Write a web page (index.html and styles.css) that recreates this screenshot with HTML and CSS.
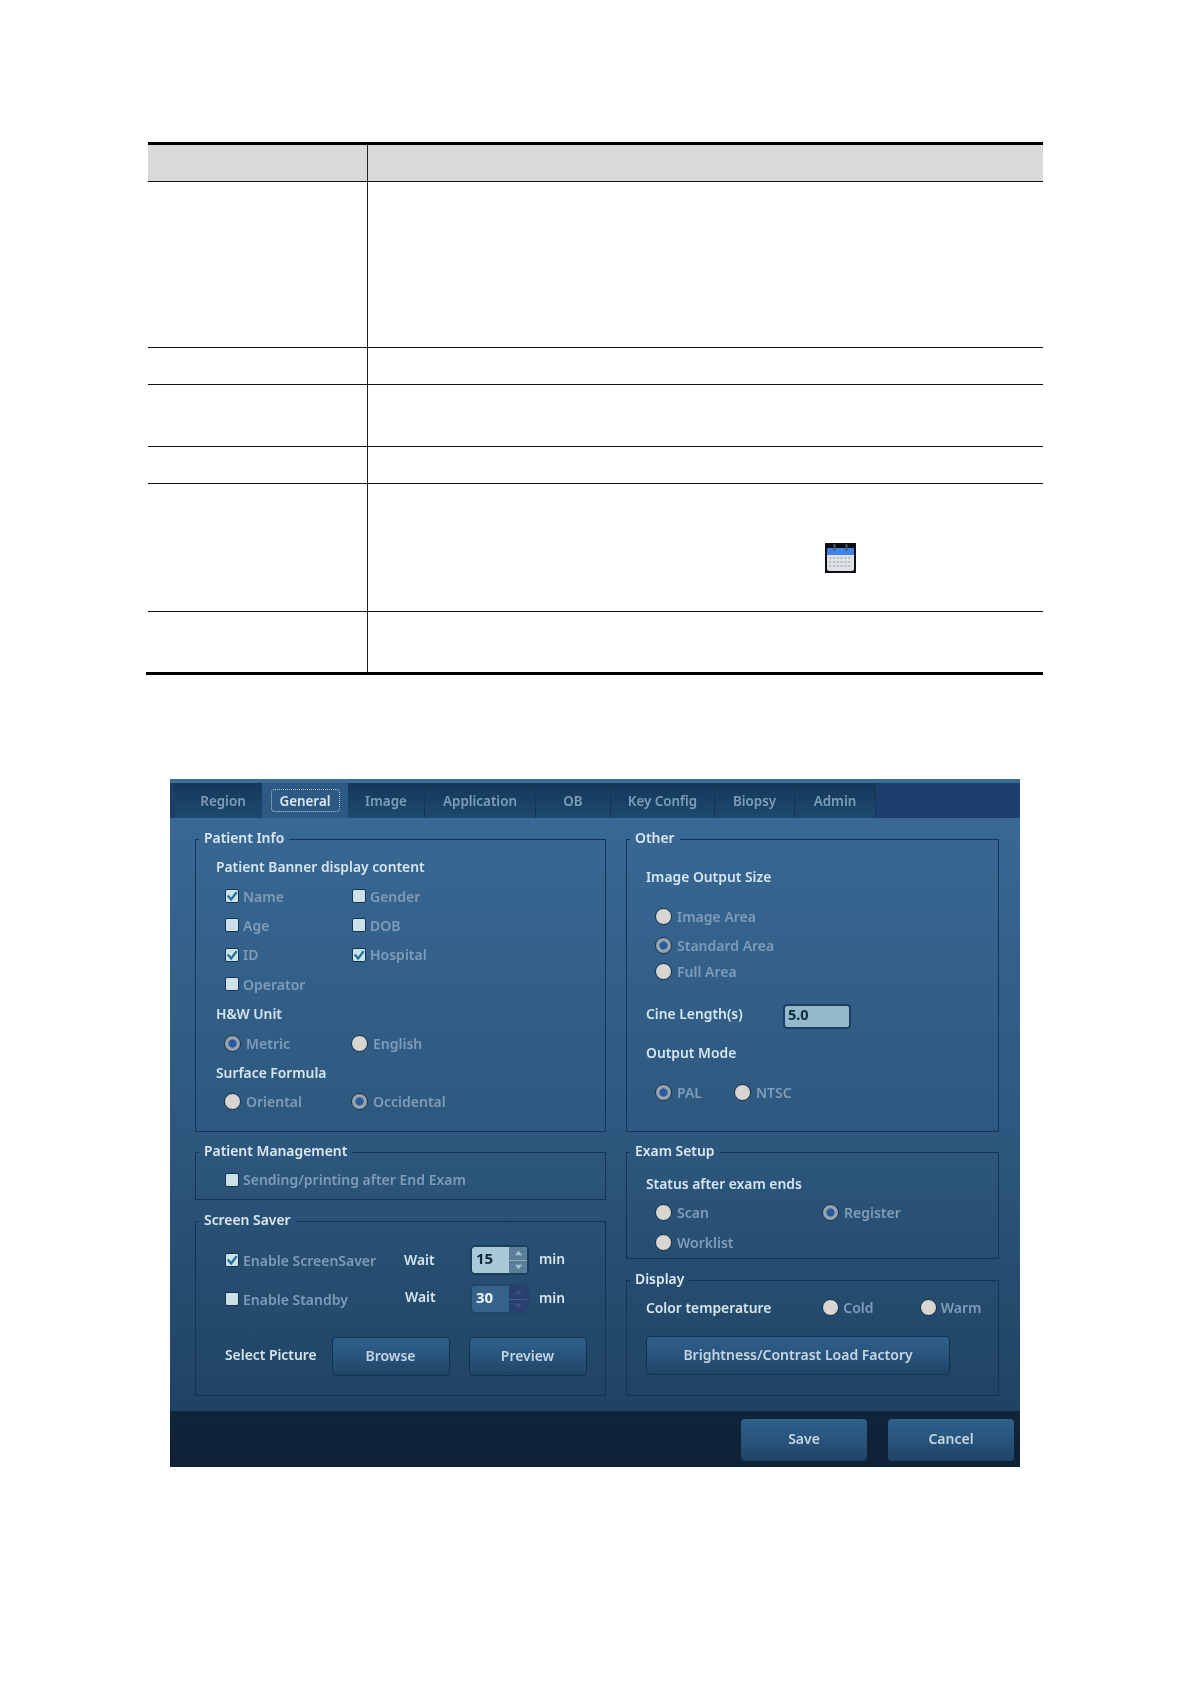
FILE: index.html
```html
<!DOCTYPE html>
<html lang="en">
<head>
<meta charset="utf-8">
<title>Setup - General</title>
<link rel="stylesheet" href="styles.css">
</head>
<body>
<svg class="defs" width="0" height="0" aria-hidden="true">
  <symbol id="tick" viewBox="0 0 14 14"><path d="M2 6.500 L6 11 L12.500 2.500" fill="none" stroke="#17739c" stroke-width="2.600"/></symbol>
  <symbol id="up" viewBox="0 0 10 6"><path d="M5 0.500 L9 5.500 H1 Z"/></symbol>
  <symbol id="down" viewBox="0 0 10 6"><path d="M1 0.500 H9 L5 5.500 Z"/></symbol>
</svg>

<section class="sheet">
  <div class="row row-head"><div class="c1"></div><div class="c2"></div></div>
  <div class="row row-a"><div class="c1"></div><div class="c2"></div></div>
  <div class="row row-b"><div class="c1"></div><div class="c2"></div></div>
  <div class="row row-c"><div class="c1"></div><div class="c2"></div></div>
  <div class="row row-b"><div class="c1"></div><div class="c2"></div></div>
  <div class="row row-d"><div class="c1"></div>
    <div class="c2 c2-icon">
      <svg class="calendar" viewBox="0 0 31 30" width="31" height="30" aria-hidden="true">
        <rect width="31" height="30" fill="#0c0f14"/>
        <rect x="2" y="5" width="27" height="23" rx="2.500" fill="#dfe1e5"/>
        <path d="M2 12 V7.500 A2.500 2.500 0 0 1 4.500 5 H26.500 A2.500 2.500 0 0 1 29 7.500 V12 Z" fill="#3f83ea"/>
        <path d="M9.500 1 V8 M21.500 1 V8" stroke="#4b5664" stroke-width="2"/>
        <g fill="none" stroke="#a0a4ac" stroke-width="1.200" stroke-dasharray="2.400 1.400">
          <path d="M4 15 H27 M4 19 H27 M4 23 H27"/>
        </g>
      </svg>
    </div>
  </div>
  <div class="row row-last"><div class="c1"></div><div class="c2"></div></div>
</section>

<section class="panel">
  <nav class="tabs">
    <a class="tab t-region">Region</a>
    <a class="tab t-general active"><span class="focus">General</span></a>
    <a class="tab t-image">Image</a>
    <a class="tab t-app">Application</a>
    <a class="tab t-ob">OB</a>
    <a class="tab t-key">Key Config</a>
    <a class="tab t-biopsy">Biopsy</a>
    <a class="tab t-admin">Admin</a>
  </nav>

  <div class="body">
    <div class="col col-left">
      <fieldset class="fs fs-info">
        <legend>Patient Info</legend>
        <div class="line head">Patient Banner display content</div>
        <div class="line opts two"><label class="opt"><i class="cb"><svg><use href="#tick"/></svg></i>Name</label><label class="opt"><i class="cb"></i>Gender</label></div>
        <div class="line opts two"><label class="opt"><i class="cb"></i>Age</label><label class="opt"><i class="cb"></i>DOB</label></div>
        <div class="line opts two"><label class="opt"><i class="cb"><svg><use href="#tick"/></svg></i>ID</label><label class="opt"><i class="cb"><svg><use href="#tick"/></svg></i>Hospital</label></div>
        <div class="line opts two"><label class="opt"><i class="cb"></i>Operator</label></div>
        <div class="line head">H&amp;W Unit</div>
        <div class="line opts two"><label class="opt"><i class="rb on"></i>Metric</label><label class="opt"><i class="rb"></i>English</label></div>
        <div class="line head">Surface Formula</div>
        <div class="line opts two"><label class="opt"><i class="rb"></i>Oriental</label><label class="opt"><i class="rb on"></i>Occidental</label></div>
      </fieldset>

      <fieldset class="fs fs-mgmt">
        <legend>Patient Management</legend>
        <div class="line opts"><label class="opt"><i class="cb"></i>Sending/printing after End Exam</label></div>
      </fieldset>

      <fieldset class="fs fs-saver">
        <legend>Screen Saver</legend>
        <div class="saver-row">
          <label class="opt"><i class="cb"><svg><use href="#tick"/></svg></i>Enable ScreenSaver</label>
          <span class="head wait-1">Wait</span>
          <div class="spin"><span class="spin-val">15</span><span class="spin-btns"><b><svg><use href="#up"/></svg></b><b><svg><use href="#down"/></svg></b></span></div>
          <span class="head unit">min</span>
        </div>
        <div class="saver-row second">
          <label class="opt"><i class="cb"></i>Enable Standby</label>
          <span class="head wait-2">Wait</span>
          <div class="spin off"><span class="spin-val">30</span><span class="spin-btns"><b><svg><use href="#up"/></svg></b><b><svg><use href="#down"/></svg></b></span></div>
          <span class="head unit">min</span>
        </div>
        <div class="pick-row">
          <span class="head pick-label">Select Picture</span>
          <button class="btn btn-browse" type="button">Browse</button>
          <button class="btn btn-preview" type="button">Preview</button>
        </div>
      </fieldset>
    </div>

    <div class="col col-right">
      <fieldset class="fs fs-other">
        <legend>Other</legend>
        <div class="line head">Image Output Size</div>
        <div class="line opts"><label class="opt"><i class="rb"></i>Image Area</label></div>
        <div class="line opts"><label class="opt"><i class="rb on"></i>Standard Area</label></div>
        <div class="line opts"><label class="opt"><i class="rb"></i>Full Area</label></div>
        <div class="line head cine"><span class="cine-label">Cine Length(s)</span><span class="field">5.0</span></div>
        <div class="line head">Output Mode</div>
        <div class="line opts"><label class="opt opt-pal"><i class="rb on"></i>PAL</label><label class="opt"><i class="rb"></i>NTSC</label></div>
      </fieldset>

      <fieldset class="fs fs-exam">
        <legend>Exam Setup</legend>
        <div class="line head">Status after exam ends</div>
        <div class="line opts"><label class="opt opt-scan"><i class="rb"></i>Scan</label><label class="opt"><i class="rb on"></i>Register</label></div>
        <div class="line opts"><label class="opt"><i class="rb"></i>Worklist</label></div>
      </fieldset>

      <fieldset class="fs fs-display">
        <legend>Display</legend>
        <div class="line temp"><span class="head temp-label">Color temperature</span><label class="opt opt-cold"><i class="rb"></i>Cold</label><label class="opt"><i class="rb"></i>Warm</label></div>
        <button class="btn btn-load" type="button">Brightness/Contrast Load Factory</button>
      </fieldset>
    </div>
  </div>

  <footer class="foot">
    <button class="btn btn-foot" type="button">Save</button>
    <button class="btn btn-foot" type="button">Cancel</button>
  </footer>
</section>
</body>
</html>
```

FILE: styles.css
```css
* { box-sizing: border-box; }
html, body { margin: 0; padding: 0; background: #fff; }
body { width: 1190px; height: 1684px; overflow: hidden; font-family: "Noto Sans", "Open Sans", sans-serif; }
.defs { position: absolute; }

/* document table */
.sheet { margin: 142px 147px 0 148px; border-top: 3px solid #000; height: 533px; }
.row { display: flex; border-bottom: 1px solid #111; }
.c1 { width: 220px; border-right: 1px solid #222; }
.c2 { flex: 1; }
.row-head { height: 37px; background: #d9d9d9; }
.row-a { height: 166px; }
.row-b { height: 37px; }
.row-c { height: 62px; }
.row-d { height: 128px; }
.c2-icon { padding: 59px 0 0 457px; }
.calendar { display: block; filter: blur(0.4px); }
.row-last { height: 63px; margin-left: -2px; border-bottom: 3px solid #000; }
.row-last .c1 { width: 222px; }

/* device panel */
.panel { width: 850px; height: 688px; margin: 104px 0 0 170px; display: flex; flex-direction: column; background: #2d577d; filter: blur(0.3px); }
.tabs { height: 39px; display: flex; padding-left: 5px; border-top: 4px solid #3b6d98; background: linear-gradient(90deg, #1b3e66, #1d3f6e); font-size: 13.400px; font-weight: 600; color: #7f9db8; }
.tab { display: flex; align-items: center; justify-content: center; background: linear-gradient(180deg, #14375a, #1e4a70); border-right: 1px solid #173552; }
.t-region { width: 87px; padding-left: 9px; border-right: 0; }
.t-general { width: 86px; }
.t-image { width: 77px; }
.t-app { width: 111px; }
.t-ob { width: 75px; }
.t-key { width: 104px; }
.t-biopsy { width: 80px; }
.t-admin { width: 81px; }
.tab.active { background: #2d5a84; border: 0; color: #dce8ee; }
.focus { width: 69px; height: 23px; margin-top: -1px; padding-top: 2px; display: flex; align-items: center; justify-content: center; border: 1px dotted #b8ccd8; border-radius: 4px; }

.body { height: 593px; padding: 10px 0 0 25px; display: flex; gap: 20px; background: linear-gradient(180deg, #386894 0%, #2d577d 55%, #1f4362 100%); }
.col { display: flex; flex-direction: column; }
.col-left { width: 411px; }
.col-right { width: 373px; }

.fs { --pad: 19px; margin: 0; padding: 0 0 0 var(--pad); min-width: 0; border: 1px solid #12345c; color: #dbe8ef; font-size: 13.850px; font-weight: 600; }
.fs legend { height: 22px; margin-left: calc(3px - var(--pad)); padding: 1px 5px 3px; line-height: 18px; font-size: 13.900px; color: #dbe8ef; }

.line { height: 26px; display: flex; align-items: center; }
.head { color: #d6e5ee; white-space: nowrap; }
.opts { margin-left: 9px; }
.two { display: grid; grid-template-columns: 127px 1fr; align-items: center; }
.opt { display: flex; align-items: center; font-size: 14px; color: #7f9cb8; white-space: nowrap; }

/* checkbox and radio */
.cb { flex: none; width: 14px; height: 14px; margin-right: 4px; background: #cde0e8; border: 1px solid #123553; border-radius: 2px; }
.cb svg { display: block; width: 12px; height: 12px; }
.rb { flex: none; width: 17px; height: 17px; margin-right: 5px; border-radius: 50%; border: 1.500px solid #1a3048; background: radial-gradient(circle, #d9d6d2 0 55%, #c9cfd0 100%); }
.rb.on { background: radial-gradient(circle, #2a5b9f 0 36%, #97a3ad 42% 100%); }

/* Patient Info */
.fs-info { --pad: 20px; height: 303.500px; }
.fs-info .line { height: 29.400px; }
.fs-info .line:first-of-type { margin-top: 2px; }
.fs-info .rb { margin-left: -1px; }

/* Patient Management */
.fs-mgmt { --pad: 29px; height: 58.500px; margin-top: 9.500px; padding-top: 3.700px; }
.fs-mgmt .opts { margin-left: 0; }

/* Screen Saver */
.fs-saver { --pad: 29px; height: 185.500px; margin-top: 10.500px; padding-top: 13px; }
.saver-row { height: 30px; display: grid; grid-template-columns: 179px 66px 59px auto; align-items: center; }
.saver-row.second { margin-top: 9px; }
.wait-1 { margin-bottom: 2px; }
.wait-2 { margin: 0 0 5px 1px; }
.unit { margin: 0 0 3px 10px; }
.spin { height: 30px; display: flex; overflow: hidden; background: #a9c9d8; border: 2px solid #1a3f5e; border-radius: 5px; }
.spin-val { width: 37px; padding-left: 4px; line-height: 23px; font-size: 15px; font-weight: 700; color: #10283a; }
.spin-btns { flex: 1; display: flex; flex-direction: column; gap: 1px; background: #8fa9bb; }
.spin-btns b { flex: 1; display: flex; align-items: center; justify-content: center; background: #5b7e98; fill: #a6c0cf; }
.spin-btns svg { width: 9px; height: 6px; }
.spin.off { background: #35628a; border-color: #214667; }
.spin.off .spin-val { color: #f0f5f8; }
.spin.off .spin-btns { background: #4a5f8a; }
.spin.off .spin-btns b { background: #2b3f70; fill: #3b5083; }
.pick-row { height: 39px; margin-top: 22.700px; display: flex; align-items: center; }
.pick-label { width: 106.500px; margin-bottom: 4px; }

.btn { padding: 0 0 2px; height: 39px; font: 600 14px "Noto Sans", "Open Sans", sans-serif; color: #c4d6e4; background: linear-gradient(180deg, #2f608b 0%, #28527a 55%, #1f4565 100%); border: 1px solid #123252; border-radius: 4px; }
.btn-browse { width: 118px; }
.btn-preview { width: 118px; margin-left: 19px; }

/* Other */
.fs-other { height: 303.500px; padding-top: 13.400px; }
.fs-other .line:nth-of-type(1) { margin-bottom: 14px; }
.fs-other .line:nth-of-type(2) { margin-bottom: 3px; }
.fs-other .line:nth-of-type(4) { margin-bottom: 16.300px; }
.fs-other .line:nth-of-type(5) { margin-bottom: 13.300px; }
.fs-other .line:nth-of-type(6) { margin-bottom: 13.400px; }
.cine-label { width: 137px; }
.field { width: 68px; height: 25px; margin-top: 5px; padding-left: 3px; line-height: 16px; font-size: 14.500px; font-weight: 700; color: #0e2a3a; background: #95b9cc; border: 2px solid #1b3f5e; border-radius: 4px; }
.opt-pal { width: 79px; }

/* Exam Setup */
.fs-exam { height: 117.500px; margin-top: 9.500px; padding-top: 7.700px; }
.fs-exam .line { margin-bottom: 3.200px; }
.opt-scan { width: 167px; }

/* Display */
.fs-display { height: 126.500px; margin-top: 10.500px; padding-top: 3.400px; }
.fs-display .rb { margin-right: 4px; }
.temp-label { width: 176.300px; }
.opt-cold { width: 97.400px; }
.btn-load { width: 304px; margin-top: 16px; display: block; }

/* footer */
.foot { height: 56px; display: flex; gap: 21px; justify-content: flex-end; align-items: flex-start; padding: 8px 6px 0 0; background: linear-gradient(180deg, #10243a, #0e2136); }
.btn-foot { width: 126px; height: 42px; padding-bottom: 4px; border: 0; border-radius: 4px; }
```
